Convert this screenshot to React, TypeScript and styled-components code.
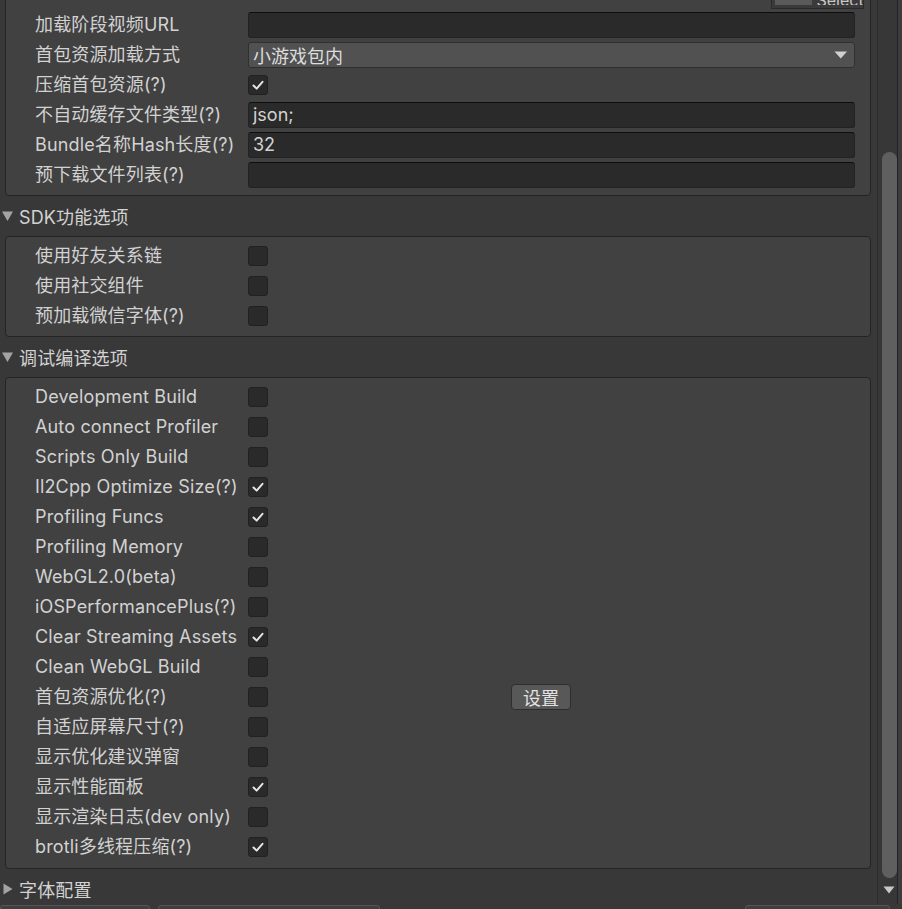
import React from "react";
import styled, { createGlobalStyle } from "styled-components";

const GlobalStyle = createGlobalStyle`
  html, body {
    margin: 0;
    padding: 0;
    background: #383838;
  }
  body {
    font-family: Inter, "Noto Sans CJK SC", "Noto Sans", sans-serif;
    color: #d2d2d2;
  }
`;

type Item = { label: string; checked?: boolean; button?: string };

const sdkItems: Item[] = [
  { label: "使用好友关系链" },
  { label: "使用社交组件" },
  { label: "预加载微信字体(?)" },
];

const debugItems: Item[] = [
  { label: "Development Build" },
  { label: "Auto connect Profiler" },
  { label: "Scripts Only Build" },
  { label: "Il2Cpp Optimize Size(?)", checked: true },
  { label: "Profiling Funcs", checked: true },
  { label: "Profiling Memory" },
  { label: "WebGL2.0(beta)" },
  { label: "iOSPerformancePlus(?)" },
  { label: "Clear Streaming Assets", checked: true },
  { label: "Clean WebGL Build" },
  { label: "首包资源优化(?)", button: "设置" },
  { label: "自适应屏幕尺寸(?)" },
  { label: "显示优化建议弹窗" },
  { label: "显示性能面板", checked: true },
  { label: "显示渲染日志(dev only)" },
  { label: "brotli多线程压缩(?)", checked: true },
];

const Check = ({ checked }: { checked?: boolean }) => (
  <CheckBox>
    {checked && (
      <svg width="20" height="20" viewBox="0 0 20 20">
        <path
          d="M5 10.5 L8.5 14 L15 6.5"
          fill="none"
          stroke="#e6e6e6"
          strokeWidth="2.2"
          strokeLinecap="round"
          strokeLinejoin="round"
        />
      </svg>
    )}
  </CheckBox>
);

const Foldout = ({ open, title }: { open: boolean; title: string }) => (
  <Header>
    <svg width="12" height="12" viewBox="0 0 12 12">
      {open ? (
        <path d="M0 1.5 L11 1.5 L5.5 11 Z" fill="#a3a3a3" />
      ) : (
        <path d="M1.5 0.5 L10.5 6 L1.5 11.5 Z" fill="#a3a3a3" />
      )}
    </svg>
    <HeaderText>{title}</HeaderText>
  </Header>
);

const CheckRows = ({ items }: { items: Item[] }) => (
  <>
    {items.map((it) => (
      <Row key={it.label}>
        <Label>{it.label}</Label>
        <Check checked={it.checked} />
        {it.button && <SmallButton>{it.button}</SmallButton>}
      </Row>
    ))}
  </>
);

export default function App() {
  return (
    <>
      <GlobalStyle />
      <Window>
        <Main>
          <Content>
            <Scroll>
              <Box>
                <ThumbRow>
                  <SelectField>
                    <Swatch />
                    <SelectText>Select</SelectText>
                  </SelectField>
                </ThumbRow>
                <Row>
                  <Label>加载阶段视频URL</Label>
                  <TextField />
                </Row>
                <Row>
                  <Label>首包资源加载方式</Label>
                  <Dropdown>
                    <span>小游戏包内</span>
                    <svg width="14" height="8" viewBox="0 0 14 8">
                      <path d="M0.5 0.5 L13 0.5 L6.75 7.5 Z" fill="#d0d0d0" />
                    </svg>
                  </Dropdown>
                </Row>
                <Row>
                  <Label>压缩首包资源(?)</Label>
                  <Check checked />
                </Row>
                <Row>
                  <Label>不自动缓存文件类型(?)</Label>
                  <TextField>json;</TextField>
                </Row>
                <Row>
                  <Label>Bundle名称Hash长度(?)</Label>
                  <TextField>32</TextField>
                </Row>
                <Row>
                  <Label>预下载文件列表(?)</Label>
                  <TextField />
                </Row>
              </Box>

              <Foldout open title="SDK功能选项" />
              <Box>
                <CheckRows items={sdkItems} />
              </Box>

              <Foldout open title="调试编译选项" />
              <Box $bottom={6}>
                <CheckRows items={debugItems} />
              </Box>

              <Foldout open={false} title="字体配置" />
            </Scroll>
          </Content>
          <ScrollBar>
            <Thumb />
            <DownArrow>
              <svg width="12" height="8" viewBox="0 0 12 8">
                <path d="M0.5 0.5 L11.5 0.5 L6 7.5 Z" fill="#c8c8c8" />
              </svg>
            </DownArrow>
          </ScrollBar>
          <Edge />
        </Main>
        <Toolbar>
          <ToolButton $w={150} />
          <ToolButton $w={222} />
          <Spacer />
          <ToolButton $w={145} />
        </Toolbar>
      </Window>
    </>
  );
}

const Window = styled.div`
  width: 902px;
  height: 909px;
  overflow: hidden;
  display: flex;
  flex-direction: column;
  background: #383838;
`;

const Main = styled.div`
  display: flex;
  height: 904px;
  flex-shrink: 0;
`;

const Content = styled.div`
  width: 878px;
  overflow: hidden;
`;

const Scroll = styled.div`
  margin-top: -25px;
`;

const Box = styled.div<{ $bottom?: number }>`
  margin: 0 6px 0 5px;
  background: #414141;
  border: 1px solid #242424;
  border-radius: 4px;
  padding: 4px 0 ${(p) => p.$bottom ?? 5}px;
`;

const ThumbRow = styled.div`
  height: 30px;
  display: flex;
  justify-content: flex-end;
  align-items: flex-end;
  padding-right: 6px;
`;

const SelectField = styled.div`
  width: 93px;
  height: 18px;
  margin-bottom: 1px;
  border: 1px solid #2a2a2a;
  background: #3a3a3a;
  display: flex;
  align-items: flex-end;
  padding: 0 0 3px 3px;
  box-sizing: border-box;
`;

const Swatch = styled.div`
  width: 37px;
  height: 12px;
  background: #5a5a5a;
`;

const SelectText = styled.span`
  margin-left: 5px;
  font-size: 16px;
  line-height: 12px;
  color: #c8c8c8;
  overflow: hidden;
  height: 11px;
`;

const Row = styled.div`
  height: 30px;
  display: flex;
  align-items: center;
  padding-left: 29px;
  padding-right: 15px;
`;

const Label = styled.div`
  width: 213px;
  flex-shrink: 0;
  font-size: 18px;
  line-height: 22px;
  letter-spacing: 0.15px;
  color: #d2d2d2;
  white-space: nowrap;
`;

const TextField = styled.div`
  flex: 1;
  height: 26px;
  box-sizing: border-box;
  background: #2a2a2a;
  border: 1px solid #222;
  border-top-color: #0e0e0e;
  border-radius: 3px;
  padding-left: 4px;
  font-size: 18px;
  line-height: 23px;
  color: #d2d2d2;
`;

const Dropdown = styled.div`
  flex: 1;
  height: 26px;
  box-sizing: border-box;
  background: #515151;
  border: 1px solid #303030;
  border-radius: 3px;
  padding: 0 6px 0 4px;
  display: flex;
  align-items: center;
  justify-content: space-between;
  font-size: 18px;
  color: #dcdcdc;
`;

const CheckBox = styled.div`
  width: 20px;
  height: 20px;
  box-sizing: border-box;
  background: #2a2a2a;
  border: 1px solid #212121;
  border-radius: 3px;
  display: flex;
  align-items: center;
  justify-content: center;
  flex-shrink: 0;
`;

const SmallButton = styled.div`
  margin-left: 243px;
  width: 60px;
  height: 26px;
  box-sizing: border-box;
  background: #585858;
  border: 1px solid #2e2e2e;
  border-radius: 4px;
  display: flex;
  align-items: center;
  justify-content: center;
  font-size: 18px;
  color: #e2e2e2;
`;

const Header = styled.div`
  height: 40px;
  display: flex;
  align-items: center;
  padding-left: 2px;
  gap: 5px;
`;

const HeaderText = styled.div`
  font-size: 18px;
  letter-spacing: 0.15px;
  color: #d2d2d2;
`;

const ScrollBar = styled.div`
  width: 20px;
  box-sizing: border-box;
  border-left: 1px solid #2c2c2c;
  background: #373737;
  display: flex;
  flex-direction: column;
  align-items: center;
  padding-top: 152px;
  padding-left: 3px;
`;

const Thumb = styled.div`
  width: 15px;
  height: 726px;
  border-radius: 8px;
  background: #5f5f5f;
`;

const DownArrow = styled.div`
  margin-top: 7px;
  height: 10px;
  display: flex;
  align-items: center;
`;

const Edge = styled.div`
  width: 4px;
  background: #3c3c3c;
  border-left: 1px solid #232323;
`;

const Toolbar = styled.div`
  flex: 1;
  display: flex;
  align-items: flex-start;
  gap: 8px;
  padding-top: 1px;
  padding-right: 12px;
  background: #383838;
`;

const Spacer = styled.div`
  flex: 1;
`;

const ToolButton = styled.div<{ $w: number }>`
  width: ${(p) => p.$w}px;
  height: 10px;
  box-sizing: border-box;
  background: #3f3f3f;
  border: 1px solid #555;
  border-radius: 3px;
`;
